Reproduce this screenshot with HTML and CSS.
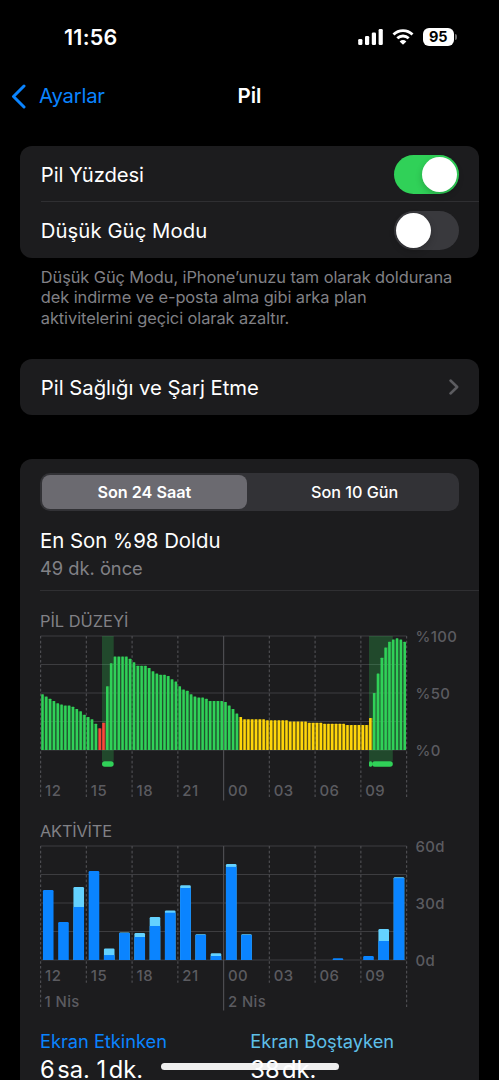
FILE: index.html
```html
<!DOCTYPE html>
<html lang="tr">
<head>
<meta charset="utf-8">
<title>Pil</title>
<link rel="stylesheet" href="styles.css">
</head>
<body>
<div class="screen">
  <header class="status">
    <span class="clock">11:56</span>
    <div class="indicators">
      <svg class="signal" viewBox="0 0 26 16" width="26" height="16">
        <rect x="0.2" y="10" width="4.2" height="6" rx="1.3"/>
        <rect x="7" y="7" width="4.2" height="9" rx="1.3"/>
        <rect x="13.8" y="3.5" width="4.2" height="12.5" rx="1.3"/>
        <rect x="20.6" y="0" width="4.2" height="16" rx="1.3"/>
      </svg>
      <svg class="wifi" viewBox="0 0 22 16" width="22" height="16">
        <path d="M1.5 5.6C6.7.3 15.300.3 20.500 5.600" class="arc"/>
        <path d="M5.300 9.300C8.500 6.200 13.500 6.200 16.700 9.300" class="arc"/>
        <path d="M7.600 12.400Q11 9.500 14.400 12.400L11.500 15.300Q11 15.800 10.500 15.300Z"/>
      </svg>
      <div class="battery"><span class="cell">95</span><span class="cap"></span></div>
    </div>
  </header>
  <nav class="nav">
    <a class="back">
      <svg viewBox="0 0 15 25" width="15" height="25"><path d="M13 2L2.500 12.500L13 23"/></svg>
      <span>Ayarlar</span>
    </a>
    <h1 class="title">Pil</h1>
    <span></span>
  </nav>
  <main class="content">
    <section class="card">
      <div class="row first"><span>Pil Yüzdesi</span><span class="switch on"><span class="knob"></span></span></div>
      <div class="row divided"><span>Düşük Güç Modu</span><span class="switch"><span class="knob"></span></span></div>
    </section>
    <p class="note">Düşük Güç Modu, iPhone’unuzu tam olarak doldurana<br>dek indirme ve e-posta alma gibi arka plan<br>aktivitelerini geçici olarak azaltır.</p>
    <section class="card link">
      <div class="row health"><span>Pil Sağlığı ve Şarj Etme</span>
        <svg class="chevron" viewBox="0 0 10 16" width="10" height="16"><path d="M1.500 1.500L8.200 8L1.500 14.500"/></svg>
      </div>
    </section>
    <section class="card usage">
      <div class="segments"><span class="segment selected">Son 24 Saat</span><span class="segment">Son 10 Gün</span></div>
      <div class="last">
        <p class="charged">En Son %98 Doldu</p>
        <p class="ago">49 dk. önce</p>
      </div>
      <h2 class="heading level">PİL DÜZEYİ</h2>
      <svg class="chart" id="level" viewBox="0 0 439 180" width="439" height="180"></svg>
      <h2 class="heading activity">AKTİVİTE</h2>
      <svg class="chart" id="activity" viewBox="0 0 439 180" width="439" height="180"></svg>
      <div class="totals">
        <div class="total"><span class="label active">Ekran Etkinken</span><span class="value">6<i></i>sa. 1<i></i>dk.</span></div>
        <div class="total"><span class="label idle">Ekran Boştayken</span><span class="value">38<i></i>dk.</span></div>
      </div>
    </section>
  </main>
  <div class="home"></div>
</div>
<script src="charts.js"></script>
</body>
</html>
```
FILE: styles.css
```css
* { box-sizing: border-box; }
body { margin: 0; background: #000; color: #fff; font-family: Inter, "Noto Sans", sans-serif; }
h1, h2, p { margin: 0; font-weight: 400; }
svg { display: block; flex: none; }
.screen { position: relative; width: 499px; height: 1080px; overflow: hidden; background: #000; }

.status { height: 70px; padding: 4px 42px 0 64px; display: flex; justify-content: space-between; align-items: center; }
.clock { font-size: 21.500px; font-weight: 600; letter-spacing: 0.25px; }
.indicators { display: flex; align-items: center; }
.signal, .wifi { fill: #fff; }
.wifi { margin: 0 9px 0 8px; }
.arc { fill: none; stroke: #fff; stroke-width: 2.800; }
.battery { display: flex; align-items: center; gap: 1px; }
.cell { width: 31.500px; height: 18px; border-radius: 6px; background: #fff; color: #000; font-size: 14.500px; font-weight: 700; line-height: 18px; text-align: center; }
.cap { width: 2px; height: 6px; border-radius: 0 2px 2px 0; background: #6c6c6c; }

.nav { height: 52px; padding: 0 11px; display: grid; grid-template-columns: 1fr auto 1fr; align-items: center; }
.back { display: flex; align-items: center; gap: 13px; color: #0a84ff; font-size: 20.300px; letter-spacing: -0.2px; }
.back span { padding-bottom: 1px; }
.back path { fill: none; stroke: #0a84ff; stroke-width: 3; stroke-linecap: round; stroke-linejoin: round; }
.title { font-size: 20.500px; font-weight: 600; padding-bottom: 2px; }

.content { padding: 24px 20.300px 0; }
.card { background: #1c1c1e; border-radius: 12px; }
.row { display: flex; height: 56px; align-items: center; justify-content: space-between; margin-left: 20.500px; padding-right: 20px; font-size: 20.300px; letter-spacing: 0; }
.first { height: 55px; padding-top: 1px; letter-spacing: -0.1px; }
.divided { height: 57px; border-top: 1px solid #2f2f32; letter-spacing: 0.07px; }
.health { padding-top: 1px; }
.switch { width: 65px; height: 39px; padding: 2px; border-radius: 20px; background: #39393d; display: flex; }
.switch.on { background: #30d158; justify-content: flex-end; }
.knob { width: 35px; height: 35px; border-radius: 50%; background: #fff; box-shadow: 0 3px 7px #0003; }
.note { margin: 9px 20px 0 20.500px; color: #818186; font-size: 16.400px; line-height: 20.300px; letter-spacing: -0.08px; white-space: nowrap; }
.link { margin-top: 31px; }
.chevron path { fill: none; stroke: #5c5c60; stroke-width: 2.500; stroke-linecap: round; stroke-linejoin: round; }

.usage { margin-top: 44.500px; padding: 14px 0 0 19.700px; height: 680px; }
.segments { display: grid; grid-template-columns: 1fr 1fr; width: 419.500px; height: 37.500px; padding: 2px; border-radius: 10px; background: #323236; font-size: 16.200px; font-weight: 500; line-height: 35px; text-align: center; }
.segment { padding-left: 2px; }
.segment.selected { padding: 0; height: 33.500px; margin-right: 3px; border-radius: 8px; background: #6b6a70; font-weight: 600; }
.last { height: 80px; padding-top: 17px; border-bottom: 1px solid #2f2f32; }
.charged { font-size: 20.400px; line-height: 25px; }
.ago { color: #818186; font-size: 18.300px; line-height: 22px; margin-top: 4px; }
.heading { height: 39px; color: #818186; font-size: 16.400px; line-height: 20px; padding-top: 20px; }
.heading.activity { height: 30px; padding-top: 11px; letter-spacing: -0.2px; }
.chart { overflow: visible; }
.grid { stroke: #3d3d40; stroke-width: 1.200; }
.tick { stroke: #4c4c50; stroke-width: 1.200; }
.dashed { stroke-dasharray: 2.600 2.200; }
.chart text { fill: #5b5b60; font-size: 14.900px; font-weight: 450; letter-spacing: .4px; }
.green { fill: #30d158; }
.red { fill: #ff453a; }
.yellow { fill: #ffd60a; }
.gap { fill-opacity: .3; }
.charging { fill: #30d158; fill-opacity: .25; }
.blue { fill: #0a84ff; }
.cyan { fill: #64d2ff; }
.totals { display: grid; grid-template-columns: 210.300px 1fr; margin-top: 9px; }
.total { display: flex; flex-direction: column; }
.label { font-size: 18.300px; line-height: 24px; letter-spacing: -0.03px; }
.active { color: #0a84ff; }
.idle { color: #5ebfe8; }
.value { font-size: 23.700px; line-height: 34px; white-space: nowrap; }
.value i { display: inline-block; width: 2.500px; }
.home { position: absolute; left: 161px; top: 1063px; width: 178px; height: 7px; border-radius: 4px; background: #ffffffed; }
```
FILE: charts.js
```js
const NS = 'http://www.w3.org/2000/svg';
const LEFT = 0.6, WIDTH = 366, TOP = 6, BASE = 120, HEIGHT = 114;

function add(svg, name, attrs, text) {
  const el = document.createElementNS(NS, name);
  for (const key in attrs) el.setAttribute(key, attrs[key]);
  if (text) el.textContent = text;
  svg.appendChild(el);
}

function drawGrid(svg) {
  for (let i = 0; i < 5; i++) {
    const y = TOP + i * HEIGHT / 4;
    add(svg, 'line', { x1: LEFT, x2: LEFT + WIDTH, y1: y, y2: y, class: 'grid' });
  }
}

function drawTicks(svg, ends, inner, labelY, scale) {
  ['12', '15', '18', '21', '00', '03', '06', '09', ''].forEach((hour, i) => {
    const x = LEFT + i * WIDTH / 8;
    const bottom = i === 4 ? 170.5 : (i % 8 === 0 ? ends : inner);
    add(svg, 'line', { x1: x, x2: x, y1: TOP, y2: bottom, class: i === 4 ? 'tick' : 'tick dashed' });
    if (hour) add(svg, 'text', { x: x + 4.5, y: labelY }, hour);
  });
  scale.forEach((s, i) => add(svg, 'text', { x: 375.5, y: 125.5 - (2 - i) * 57 }, s));
}

const level = document.getElementById('level');
const values = [49,47,45,43,41,40,39,39,38,36,34,31,29,27,23,19,24,56,76,82,82,82,82,80,77,74,74,74,72,69,67,66,66,65,
  62,60,56,53,52,49,47,46,46,45,43,43,43,43,42,39,36,32,29,27,27,27,27,27,27,26,26,26,26,26,26,25,25,25,25,25,24,24,24,24,
  23,23,23,23,23,23,22,22,22,22,22,22,28,50,67,81,90,95,97,98,97,95];
const color = i => i === 15 || i === 16 ? 'red' : i >= 52 && i <= 86 ? 'yellow' : 'green';
drawGrid(level);
drawTicks(level, 168.5, 168.5, 166.3, ['%100', '%50', '%0']);
[[62, 11.7], [329, 3], [332, 20.8]].forEach(([x, w]) => {
  add(level, 'rect', { x, y: TOP, width: w, height: 125.5, class: 'charging' });
  add(level, 'rect', { x, y: 131.3, width: w, height: 5.4, rx: w < 5 ? 1.2 : 2.7, class: 'green' });
});
const pitch = WIDTH / 96;
values.forEach((v, i) => {
  const x = LEFT + i * pitch + 0.6;
  const h = v * HEIGHT / 100;
  add(level, 'rect', { x, y: BASE - h, width: 2.6, height: h, rx: 0.5, class: color(i) });
  if (i < 95) {
    const g = Math.min(v, values[i + 1]) * HEIGHT / 100;
    add(level, 'rect', { x: x + 2.6, y: BASE - g, width: pitch - 2.6, height: g, class: 'gap ' + color(i) });
  }
});

// Minutes per hour: [screen active, screen idle]
const activity = document.getElementById('activity');
const minutes = [[36.8,0],[20,0],[27.9,10.5],[46.8,0],[2.6,3.4],[14.2,.3],[12.1,2.1],[17.9,4.7],[24.9,1.2],[37.9,1.4],
  [13.2,.3],[2.1,1.4],[49,1.5],[13.2,.3],[0,0],[0,0],[0,0],[0,0],[0,0],[.9,0],[0,0],[2.1,0],[10,6.3],[43.1,.5]];
drawGrid(activity);
drawTicks(activity, 168, 142.7, 140.8, ['60d', '30d', '0d']);
minutes.forEach(([on, idle], i) => {
  if (!on) return;
  const x = LEFT + (i + 0.5) * WIDTH / 24 - 5.3;
  const a = on * HEIGHT / 60, b = idle * HEIGHT / 60, r = 1.2;
  const y = BASE - a - b;
  const d = `M${x} ${y + a + b}V${y + Math.min(r, a + b)}q0-${Math.min(r, a + b)} ${r}-${Math.min(r, a + b)}h${10.6 - 2 * r}q${r} 0 ${r} ${Math.min(r, a + b)}V${y + a + b}Z`;
  add(activity, 'path', { d, class: idle ? 'cyan' : 'blue' });
  if (idle) add(activity, 'rect', { x, y: BASE - a, width: 10.6, height: a, class: 'blue' });
});
add(activity, 'text', { x: 4.6, y: 166.5 }, '1 Nis');
add(activity, 'text', { x: 188, y: 166.5 }, '2 Nis');
```
